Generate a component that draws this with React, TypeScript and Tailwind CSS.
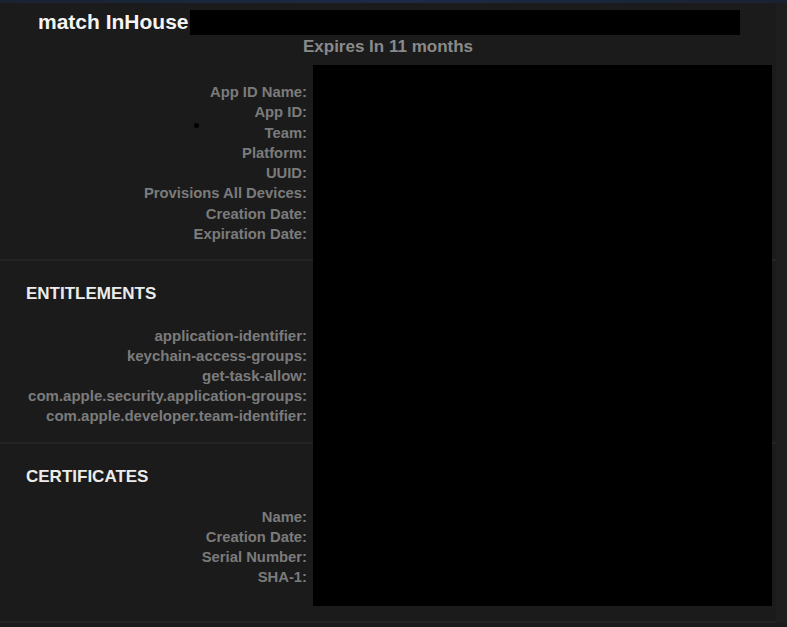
import React from "react";

const font = { fontFamily: '"Liberation Sans", Arial, Helvetica, sans-serif' };

function Rows({ labels, h, size = "text-[15px]" }: { labels: string[]; h: string; size?: string }) {
  return (
    <div className="flex flex-col">
      {labels.map((l) => (
        <div key={l} className={`w-[307px] text-right font-bold ${size} text-[#7b7b7b] whitespace-nowrap ${h} leading-[20px]`}>
          {l}
        </div>
      ))}
    </div>
  );
}

function Divider({ className = "" }: { className?: string }) {
  return <div className={`h-[2px] w-full bg-[#242424] ${className}`} />;
}

export default function App() {
  return (
    <div className="w-[787px] h-[627px] bg-[#1b1b1b] overflow-hidden relative" style={font}>
      <div className="h-[3px] w-full bg-gradient-to-r from-[#1a2232] via-[#1c2a45] to-[#1a2232]" />
      <div className="flex">
        <div className="w-[776px] flex flex-col">
          <div className="flex items-center h-[25px] mt-[7px] pl-[38px]">
            <span className="text-[21px] font-bold text-[#f4f4f4] leading-[25px] -mt-[2px]">match InHouse</span>
            <div className="w-[550px] h-[25px] bg-black ml-[1px]" />
          </div>
          <div className="mt-[2px] h-[20px] leading-[20px] text-center font-bold text-[17px] text-[#8a8a8a] w-[776px]">
            Expires In 11 months
          </div>
          <div className="mt-[25px]">
            <Rows
              h="h-[20.3px]"
              size="text-[14.8px]"
              labels={[
                "App ID Name:",
                "App ID:",
                "Team:",
                "Platform:",
                "UUID:",
                "Provisions All Devices:",
                "Creation Date:",
                "Expiration Date:",
              ]}
            />
          </div>
          <Divider className="mt-[15px]" />
          <div className="mt-[23px] pl-[26px] h-[20px] leading-[20px] font-bold text-[17px] text-[#ececec]">ENTITLEMENTS</div>
          <div className="mt-[22px]">
            <Rows
              h="h-[20px]"
              labels={[
                "application-identifier:",
                "keychain-access-groups:",
                "get-task-allow:",
                "com.apple.security.application-groups:",
                "com.apple.developer.team-identifier:",
              ]}
            />
          </div>
          <Divider className="mt-[16px]" />
          <div className="mt-[23px] pl-[26px] h-[20px] leading-[20px] font-bold text-[17px] text-[#ececec]">CERTIFICATES</div>
          <div className="mt-[20px]">
            <Rows h="h-[20px]" size="text-[14.8px]" labels={["Name:", "Creation Date:", "Serial Number:", "SHA-1:"]} />
          </div>
          <Divider className="mt-[34px]" />
        </div>
        <div className="w-[11px] bg-[#1e1e1e]" />
      </div>
      <div className="absolute left-[313px] top-[65px] w-[459px] h-[541px] bg-black" />
      <div className="absolute left-[194px] top-[123px] w-[5px] h-[5px] rounded-full bg-black" />
    </div>
  );
}
